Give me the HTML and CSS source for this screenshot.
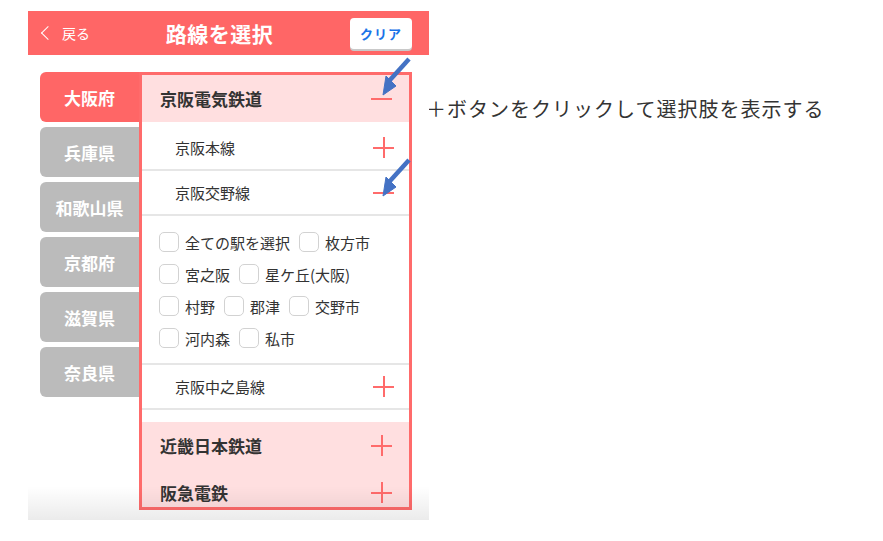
FILE: index.html
```html
<!DOCTYPE html>
<html lang="ja">
<head>
  <meta charset="UTF-8">
  <title>路線を選択</title>
  <link rel="stylesheet" href="styles.css">
</head>
<body>

  <div class="sheet">
    <!-- Phone screen -->
    <div class="phone">
      <div class="topbar">
        <div class="back"><span class="chev"></span>戻る</div>
        <h1>路線を選択</h1>
        <button class="clear">クリア</button>
      </div>

      <div class="screen">
        <ul class="prefs">
          <li class="pref active">大阪府</li>
          <li class="pref">兵庫県</li>
          <li class="pref">和歌山県</li>
          <li class="pref">京都府</li>
          <li class="pref">滋賀県</li>
          <li class="pref">奈良県</li>
        </ul>

        <div class="panel">
          <div class="company">京阪電気鉄道<span class="icon minus"></span></div>
          <div class="lines">
            <div class="line">京阪本線<span class="icon plus"></span></div>
            <div class="line">京阪交野線<span class="icon minus"></span></div>
            <div class="stations">
              <label class="station"><span class="box"></span>全ての駅を選択</label>
              <label class="station"><span class="box"></span>枚方市</label>
              <label class="station"><span class="box"></span>宮之阪</label>
              <label class="station"><span class="box"></span>星ケ丘(大阪)</label>
              <label class="station"><span class="box"></span>村野</label>
              <label class="station"><span class="box"></span>郡津</label>
              <label class="station"><span class="box"></span>交野市</label>
              <label class="station"><span class="box"></span>河内森</label>
              <label class="station"><span class="box"></span>私市</label>
            </div>
            <div class="line">京阪中之島線<span class="icon plus"></span></div>
          </div>
          <div class="company">近畿日本鉄道<span class="icon plus"></span></div>
          <div class="company">阪急電鉄<span class="icon plus"></span></div>
        </div>
      </div>
    </div>

    <p class="note">＋ボタンをクリックして選択肢を表示する</p>
  </div>

  <!-- annotation arrows -->
  <svg class="arrows" width="883" height="541" viewBox="0 0 883 541">
    <g fill="#4472c4" stroke="#4472c4">
      <line x1="409" y1="59" x2="390" y2="80" stroke-width="4.5"/>
      <polygon points="383,95 386,76 396,86" stroke-width="1"/>
      <line x1="409" y1="160" x2="390" y2="181" stroke-width="4.5"/>
      <polygon points="383,196 386,177 396,187" stroke-width="1"/>
    </g>
  </svg>

</body>
</html>
```

FILE: styles.css
```css
* {
  box-sizing: border-box;
}

body {
  margin: 0;
  background: #fff;
  color: #333;
  font-family: "Noto Sans CJK JP", "Noto Sans", sans-serif;
}

.sheet {
  display: flex;
  align-items: flex-start;
  padding: 11px 0 0 28px;
}

.phone {
  position: relative;
  width: 401px;
  height: 509px;
  background: #fff;
  overflow: hidden;
}

/* soft shade at the bottom of the screen */
.phone::after {
  content: "";
  position: absolute;
  left: 0;
  right: 0;
  bottom: 0;
  height: 34px;
  background: linear-gradient(rgba(0, 0, 0, 0), rgba(0, 0, 0, 0.08));
  pointer-events: none;
}

/* Top bar */
.topbar {
  height: 44px;
  background: #ff6666;
  display: flex;
  align-items: center;
  justify-content: space-between;
  padding: 0 17px 0 12px;
  color: #fff;
}

.back {
  width: 110px;
  display: flex;
  align-items: center;
  font-size: 14px;
}

.chev {
  width: 10px;
  height: 10px;
  border-left: 1.5px solid #fff;
  border-bottom: 1.5px solid #fff;
  transform: rotate(45deg);
  margin: 0 9px 0 3px;
}

.topbar h1 {
  margin: 0;
  font-size: 21px;
  font-weight: bold;
  letter-spacing: 0.5px;
}

.clear {
  width: 62px;
  height: 31px;
  margin-left: 61px;
  border: none;
  border-radius: 4px;
  background: #fff;
  box-shadow: 0 2px 0 #c9c9c9;
  color: #1a73e8;
  font-family: inherit;
  font-size: 13px;
  font-weight: bold;
  letter-spacing: 1px;
  padding: 0;
}

/* Body */
.screen {
  display: flex;
  align-items: flex-start;
  padding: 17px 0 0 12px;
}

.prefs {
  list-style: none;
  margin: 0;
  padding: 0;
  width: 99px;
  display: flex;
  flex-direction: column;
  gap: 5px;
}

.pref {
  height: 50px;
  background: #bbbbbb;
  border-radius: 6px 0 0 6px;
  color: #fff;
  font-size: 17px;
  font-weight: bold;
  display: flex;
  align-items: center;
  justify-content: center;
}

.pref.active {
  background: #ff6666;
}

.panel {
  width: 273px;
  height: 438px;
  border: 3px solid #ff6b6b;
  overflow: hidden;
  background: #fff;
}

.company {
  height: 47px;
  background: #ffdfe0;
  display: flex;
  align-items: center;
  justify-content: space-between;
  padding: 0 17px 0 18px;
  font-size: 17px;
  font-weight: bold;
  color: #333;
}

.lines {
  padding: 4px 0 12px;
}

.line {
  height: 45px;
  display: flex;
  align-items: center;
  justify-content: space-between;
  padding: 0 15px 0 33px;
  font-size: 15px;
  border-bottom: 2px solid #e6e6e6;
}

.stations {
  display: flex;
  flex-wrap: wrap;
  gap: 12px 0;
  padding: 16px 0 15px 17px;
  border-bottom: 2px solid #e6e6e6;
}

.station {
  display: flex;
  align-items: center;
  height: 20px;
  font-size: 15px;
  margin-right: 9px;
}

.box {
  width: 20px;
  height: 20px;
  border: 1px solid #d2d2d2;
  border-radius: 5px;
  margin-right: 6px;
}

/* plus / minus */
.icon {
  position: relative;
  width: 21px;
  height: 21px;
}

.icon::before,
.icon::after {
  content: "";
  position: absolute;
  background: #ff6b6b;
}

.icon::before {
  left: 0;
  right: 0;
  top: 10px;
  height: 2px;
}

.plus::after {
  top: 0;
  bottom: 0;
  left: 10px;
  width: 2px;
}

.note {
  margin: 83px 0 0 -3px;
  font-size: 20px;
  letter-spacing: 1px;
  color: #333;
}

.arrows {
  position: absolute;
  left: 0;
  top: 0;
  pointer-events: none;
}
```
